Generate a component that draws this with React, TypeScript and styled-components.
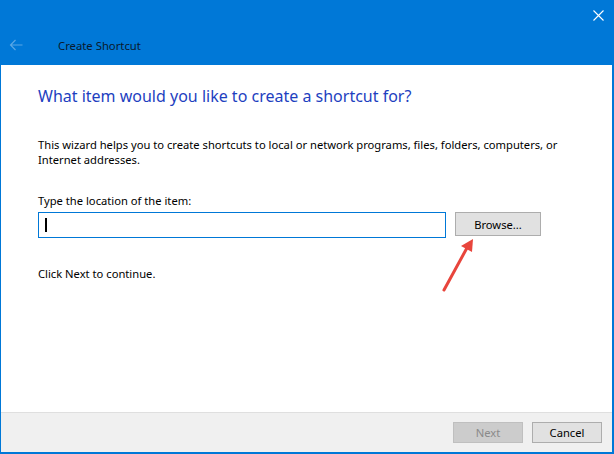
import React from "react";
import styled, { createGlobalStyle } from "styled-components";

const GlobalStyle = createGlobalStyle`
  html, body {
    margin: 0;
    padding: 0;
    background: #ffffff;
  }
  * {
    box-sizing: border-box;
  }
`;

const Window = styled.div`
  position: relative;
  width: 614px;
  height: 454px;
  display: flex;
  flex-direction: column;
  border-left: 1px solid #0078d7;
  border-right: 2px solid #0078d7;
  border-bottom: 2px solid #0078d7;
  font-family: "Noto Sans", "Open Sans", sans-serif;
  background: #ffffff;
  overflow: hidden;
`;

const TitleBar = styled.div`
  height: 65px;
  background: #0078d7;
  display: flex;
  flex-direction: column;
  margin-right: -2px;
  margin-left: -1px;
`;

const TopRow = styled.div`
  height: 30px;
  display: flex;
  justify-content: flex-end;
  align-items: flex-start;
  padding: 9px 10px 0 0;
`;

const CloseButton = styled.button`
  width: 12px;
  height: 12px;
  padding: 0;
  border: 0;
  background: transparent;
  display: flex;
  align-items: center;
  justify-content: center;
`;

const NavRow = styled.div`
  display: flex;
  align-items: center;
  height: 30px;
  padding-left: 9px;
`;

const BackArrow = styled.div`
  width: 14px;
  height: 12px;
  display: flex;
  margin-right: 35px;
`;

const WindowTitle = styled.span`
  font-size: 11.3px;
  color: #0a1a2e;
`;

const Content = styled.div`
  flex: 1;
  display: flex;
  flex-direction: column;
  padding: 21px 0 0 37px;
`;

const Heading = styled.h1`
  margin: 0;
  font-size: 16px;
  line-height: 20px;
  font-weight: 400;
  color: #1e3fbf;
`;

const Text = styled.p<{ $top: number }>`
  margin: ${(p) => p.$top}px 0 0 0;
  font-size: 11.2px;
  line-height: 15px;
  color: #000000;
  white-space: nowrap;
`;

const FieldRow = styled.div`
  display: flex;
  align-items: flex-start;
  gap: 9px;
  margin-top: 4px;
`;

const Input = styled.div`
  width: 408px;
  height: 26px;
  border: 1px solid #0078d7;
  display: flex;
  align-items: center;
  padding-left: 6px;
`;

const Caret = styled.div`
  width: 2px;
  height: 14px;
  background: #000000;
`;

const Button = styled.button<{ $disabled?: boolean }>`
  height: 24px;
  min-width: 70px;
  padding: 0;
  font-family: "Noto Sans", "Open Sans", sans-serif;
  font-size: 11.2px;
  color: ${(p) => (p.$disabled ? "#8a8a8a" : "#000000")};
  background: ${(p) => (p.$disabled ? "#cccccc" : "#e1e1e1")};
  border: 1px solid ${(p) => (p.$disabled ? "#bfbfbf" : "#adadad")};
  display: flex;
  align-items: center;
  justify-content: center;
`;

const BrowseButton = styled(Button)`
  width: 86px;
`;

const Footer = styled.div`
  height: 40px;
  background: #f0f0f0;
  border-top: 1px solid #dfdfdf;
  display: flex;
  justify-content: flex-end;
  align-items: flex-start;
  gap: 9px;
  padding: 9px 10px 0 0;
`;

const FooterButton = styled(Button)`
  width: 70px;
  height: 21px;
`;

const Annotation = styled.svg`
  position: absolute;
  left: 436px;
  top: 232px;
  width: 44px;
  height: 64px;
  pointer-events: none;
`;

export default function App() {
  return (
    <>
      <GlobalStyle />
      <Window>
        <TitleBar>
          <TopRow>
            <CloseButton aria-label="Close">
              <svg width="11" height="11" viewBox="0 0 11 11">
                <path d="M0.5 0.5 L10.5 10.5 M10.5 0.5 L0.5 10.5" stroke="#ffffff" strokeWidth="1.1" />
              </svg>
            </CloseButton>
          </TopRow>
          <NavRow>
            <BackArrow>
              <svg width="14" height="12" viewBox="0 0 14 12">
                <path
                  d="M13.5 6 H1.5 M6.5 1 L1.5 6 L6.5 11"
                  stroke="rgba(255,255,255,0.35)"
                  strokeWidth="1.2"
                  fill="none"
                />
              </svg>
            </BackArrow>
            <WindowTitle>Create Shortcut</WindowTitle>
          </NavRow>
        </TitleBar>
        <Content>
          <Heading>What item would you like to create a shortcut for?</Heading>
          <Text $top={31}>
            This wizard helps you to create shortcuts to local or network programs, files, folders, computers, or
            <br />
            Internet addresses.
          </Text>
          <Text $top={26}>Type the location of the item:</Text>
          <FieldRow>
            <Input>
              <Caret />
            </Input>
            <BrowseButton>Browse...</BrowseButton>
          </FieldRow>
          <Text $top={28}>Click Next to continue.</Text>
        </Content>
        <Footer>
          <FooterButton $disabled>Next</FooterButton>
          <FooterButton>Cancel</FooterButton>
        </Footer>
        <Annotation viewBox="0 0 44 64">
          <line x1="7" y1="58" x2="31" y2="14" stroke="#e8453c" strokeWidth="3" strokeLinecap="round" />
          <polygon points="36,7 24,14 35,20" fill="#e8453c" />
        </Annotation>
      </Window>
    </>
  );
}
